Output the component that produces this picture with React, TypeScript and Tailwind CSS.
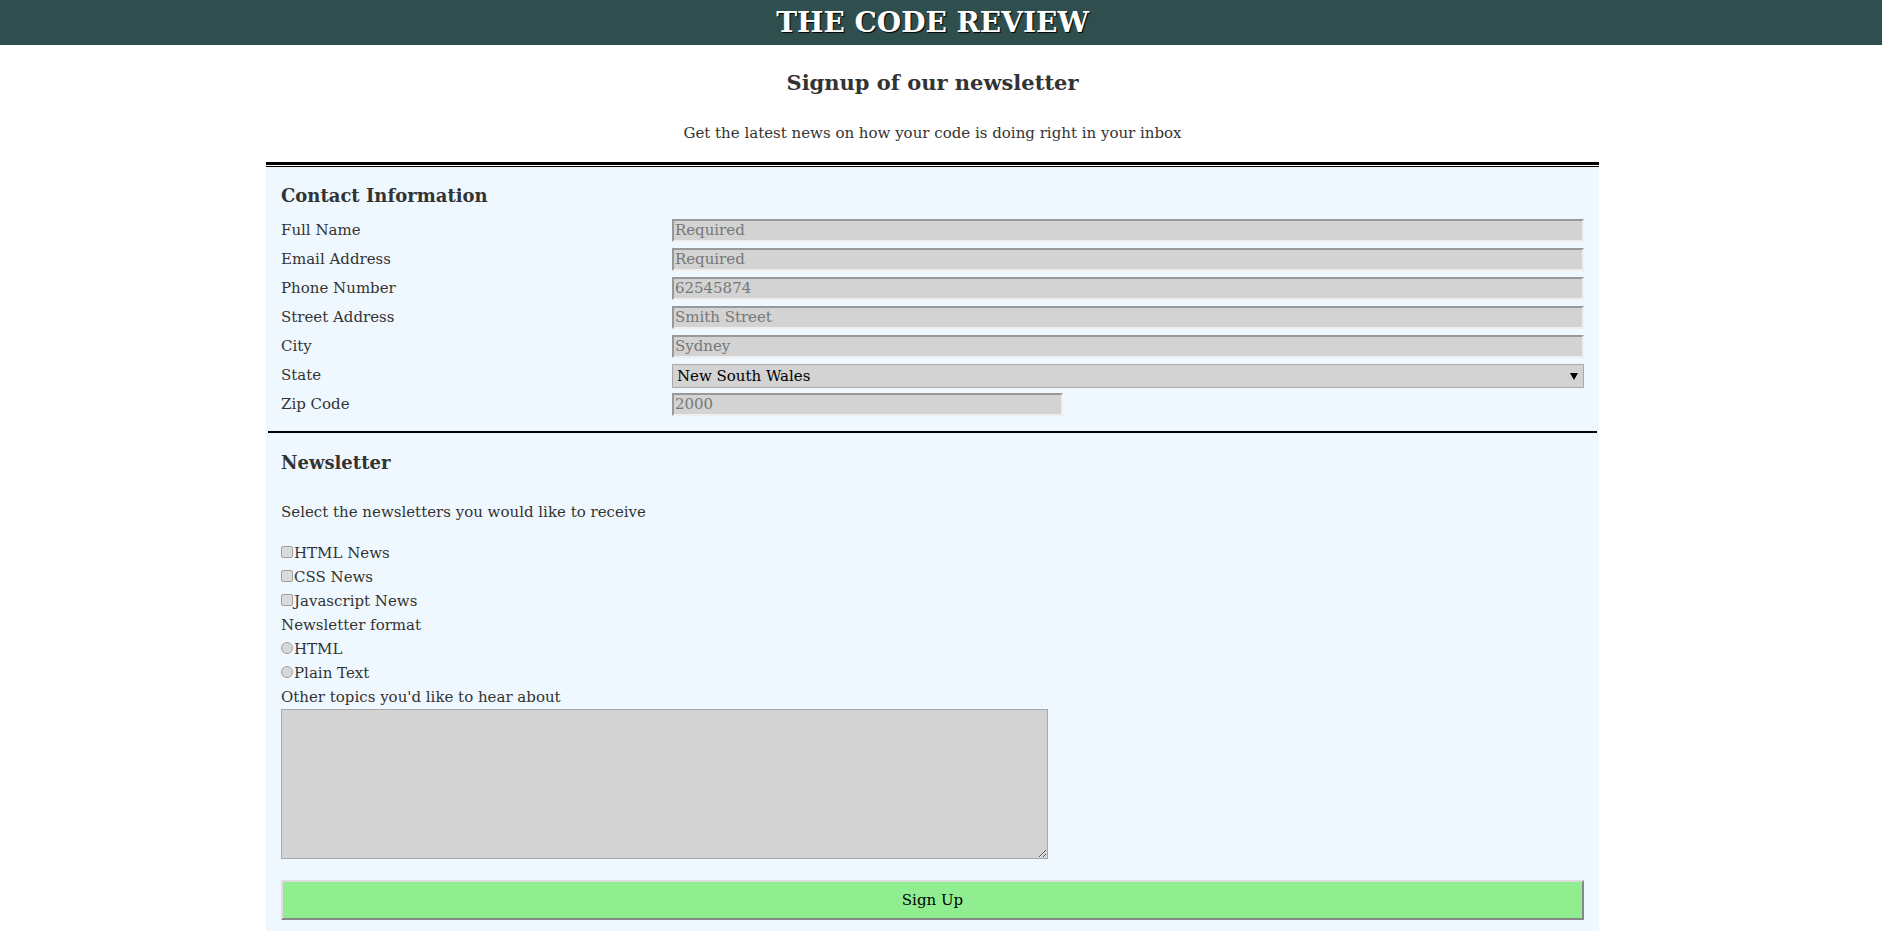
import React from 'react';

const fieldCls =
  'block w-full h-[23px] bg-[#d3d3d3] border-2 border-t-[#999] border-l-[#999] border-b-[#eee] border-r-[#eee] pl-px text-[15px] text-[#333] placeholder:text-[#777] outline-none';

interface RowProps {
  label: string;
  children: React.ReactNode;
}

const Row: React.FC<RowProps> = ({ label, children }) => (
  <div className="grid grid-cols-[30%_70%] items-center h-[23px]">
    <label className="text-[15px] leading-[23px] text-[#333] pt-px">{label}</label>
    <div className="h-[23px]">{children}</div>
  </div>
);

const Check: React.FC<{ label: string; type?: 'checkbox' | 'radio'; name?: string }> = ({ label, type = 'checkbox', name }) => (
  <label className="flex items-center h-[24px] text-[15px] text-[#333]">
    <input
      type={type}
      name={name}
      className={
        type === 'radio'
          ? 'appearance-none w-[12px] h-[12px] mb-[3px] rounded-full border border-[#a0a0a0] bg-[#d8d8d8]'
          : 'appearance-none w-[12px] h-[12px] mb-[3px] rounded-[2px] border border-[#a0a0a0] bg-[#dcdcdc]'
      }
    />
    <span className="ml-px">{label}</span>
  </label>
);

export default function App() {
  return (
    <div className="min-h-screen bg-white font-['DejaVu_Serif','Liberation_Serif',serif] text-[#333]">
      {/* Banner */}
      <header className="h-[45px] bg-[#2f4f4f]">
        <div className="w-[1865px] h-full flex items-center justify-center">
          <h1 className="text-[28px] leading-none font-bold text-white [text-shadow:1px_1px_1px_#000]">THE CODE REVIEW</h1>
        </div>
      </header>

      <div className="w-[1865px]">
        <div className="w-[1333px] mx-auto">
          <h2 className="mt-[23px] text-center text-[21px] leading-[30px] font-bold text-[#333]">Signup of our newsletter</h2>
          <p className="mt-[23px] text-center text-[15px] leading-[24px] text-[#333]">
            Get the latest news on how your code is doing right in your inbox
          </p>

          <div className="mt-[17px] h-[3px] bg-black" />
          <div className="h-px" />

          <form className="border-t border-black bg-[#f0f8ff] pb-[20px]" onSubmit={(e) => e.preventDefault()}>
            {/* Contact */}
            <section className="px-[15px] pt-[16px] pb-[16px]">
              <h3 className="text-[18px] leading-[26px] font-bold text-[#333]">Contact Information</h3>
              <div className="mt-[9px] flex flex-col gap-[6px]">
                <Row label="Full Name">
                  <input className={fieldCls} placeholder="Required" />
                </Row>
                <Row label="Email Address">
                  <input className={fieldCls} placeholder="Required" />
                </Row>
                <Row label="Phone Number">
                  <input className={fieldCls} placeholder="62545874" />
                </Row>
                <Row label="Street Address">
                  <input className={fieldCls} placeholder="Smith Street" />
                </Row>
                <Row label="City">
                  <input className={fieldCls} placeholder="Sydney" />
                </Row>
                <Row label="State">
                  <div className="relative">
                    <select className="appearance-none block w-full h-[24px] bg-[#d3d3d3] border border-[#a9a9a9] pl-[4px] text-[15px] text-black outline-none">
                      <option>New South Wales</option>
                      <option>Victoria</option>
                      <option>Queensland</option>
                    </select>
                    <span className="pointer-events-none absolute right-[6px] top-[9px] w-0 h-0 border-l-[4px] border-r-[4px] border-t-[7px] border-l-transparent border-r-transparent border-t-black" />
                  </div>
                </Row>
                <Row label="Zip Code">
                  <input className={fieldCls + ' !w-[391px]'} placeholder="2000" />
                </Row>
              </div>
            </section>

            <div className="mx-[2px] h-[2px] bg-black" />

            {/* Newsletter */}
            <section className="px-[15px] pt-[17px]">
              <h3 className="text-[18px] leading-[26px] font-bold text-[#333]">Newsletter</h3>
              <p className="mt-[24px] text-[15px] leading-[24px]">Select the newsletters you would like to receive</p>
              <div className="mt-[17px]">
                <Check label="HTML News" />
                <Check label="CSS News" />
                <Check label="Javascript News" />
                <div className="h-[24px] leading-[24px] text-[15px]">Newsletter format</div>
                <Check label="HTML" type="radio" name="format" />
                <Check label="Plain Text" type="radio" name="format" />
                <div className="h-[24px] leading-[24px] text-[15px]">Other topics you'd like to hear about</div>
                <textarea className="block w-[767px] h-[150px] bg-[#d3d3d3] border border-[#a9a9a9] outline-none" />
              </div>
              <button
                type="submit"
                className="mt-[21px] block w-full h-[40px] bg-[#90ee90] border-2 border-t-[#ddd] border-l-[#ddd] border-b-[#888] border-r-[#888] text-[15px] text-black"
              >
                Sign Up
              </button>
            </section>
          </form>
        </div>
      </div>
    </div>
  );
}
